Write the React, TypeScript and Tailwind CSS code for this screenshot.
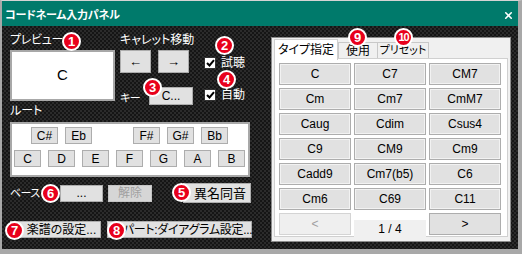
import { X } from "lucide-react";
import clsx from "clsx";
import type { ReactNode } from "react";

const font = "font-['Liberation_Sans','Noto_Sans_CJK_JP',sans-serif] [font-feature-settings:'palt']";

function Badge({ n, className }: { n: number; className?: string }) {
    return (
        <div
            className={clsx(
                "absolute z-20 flex h-[19px] w-[19px] items-center justify-center rounded-full border-2 border-white bg-[#e8001c] font-bold leading-none text-white",
                n > 9 ? "text-[11px] tracking-[-1px]" : "text-[13px]",
                className
            )}
        >
            {n}
        </div>
    );
}

function Btn({
    children,
    className,
    disabled,
}: {
    children?: ReactNode;
    className?: string;
    disabled?: boolean;
}) {
    return (
        <div
            className={clsx(
                "flex shrink-0 items-center justify-center whitespace-nowrap border text-[12px] leading-none",
                disabled
                    ? "border-[#c4c4c4] bg-[#d6d6d6] text-[#a0a0a0]"
                    : "border-[#adadad] bg-[#e1e1e1] text-black",
                className
            )}
        >
            {children}
        </div>
    );
}

function Check({ label }: { label: string }) {
    return (
        <div className="flex items-center gap-[5px]">
            <div className="flex h-[12px] w-[12px] items-center justify-center border border-[#333] bg-white">
                <svg width="9" height="8" viewBox="0 0 9 8">
                    <path d="M1 4 L3.5 6.5 L8 1.2" fill="none" stroke="#000" strokeWidth="2" />
                </svg>
            </div>
            <span className="text-[12px] leading-none text-white">{label}</span>
        </div>
    );
}

const chords = [
    "C", "C7", "CM7",
    "Cm", "Cm7", "CmM7",
    "Caug", "Cdim", "Csus4",
    "C9", "CM9", "Cm9",
    "Cadd9", "Cm7(b5)", "C6",
    "Cm6", "C69", "C11",
];

export default function App() {
    return (
        <div
            className={clsx(
                "flex h-[254px] w-[522px] flex-col overflow-hidden border-t border-l-2 border-r-4 border-b-[5px] border-t-[#d4d4d4] border-l-[#a8a8a8] border-r-[#a8a8a8] border-b-[#a8a8a8]",
                font
            )}
        >
            {/* title */}
            <div className="flex h-[25px] shrink-0 items-center justify-between bg-[#007a6b] pl-[3px] pr-[4px] pt-[3px]">
                <span className="text-[11px] font-bold leading-none tracking-[-0.2px] text-white">
                    コードネーム入力パネル
                </span>
                <X size={11} strokeWidth={3.5} className="text-white" />
            </div>

            <div className="flex flex-1 bg-[image:conic-gradient(#2b2b2b_25%,#151515_0_50%,#2b2b2b_0_75%,#151515_0)] bg-[length:4px_4px] pl-[8px]">
                {/* left column */}
                <div className="flex w-[243px] flex-col pt-[5px]">
                    <div className="flex h-[72px]">
                        <div className="relative w-[105px]">
                            <div className="h-[19px] text-[12px] leading-[19px] tracking-[-0.3px] text-white">プレビュー</div>
                            <Badge n={1} className="left-[52px] top-[1px]" />
                            <div className="flex h-[51px] w-[105px] items-center justify-center border-2 border-[#a8a8a8] bg-white text-[15px] text-black">
                                C
                            </div>
                        </div>
                        <div className="ml-[5px] w-[84px]">
                            <div className="h-[19px] whitespace-nowrap text-[12px] leading-[19px] text-white">キャレット移動</div>
                            <div className="flex gap-[7px]">
                                <Btn className="h-[23px] w-[31px] text-[13px]">←</Btn>
                                <Btn className="h-[23px] w-[31px] border-[#0078d7] text-[13px]">→</Btn>
                            </div>
                            <div className="relative mt-[14px] flex h-[18px] items-center">
                                <span className="mt-[4px] w-[29px] whitespace-nowrap text-[11px] leading-none tracking-[-0.5px] text-white">キー</span>
                                <Btn className="h-[18px] w-[44px]">C...</Btn>
                                <Badge n={3} className="left-[23px] top-[-9px]" />
                            </div>
                        </div>
                        <div className="relative w-[48px] pt-[26px]">
                            <Badge n={2} className="left-[11px] top-[5px]" />
                            <Check label="試聴" />
                            <div className="mt-[20px]">
                                <Check label="自動" />
                            </div>
                            <Badge n={4} className="left-[13px] top-[39px]" />
                        </div>
                    </div>

                    <div className="h-[17px] text-[12px] leading-[17px] text-white">ルート</div>
                    <div className="mt-[2px] flex h-[55px] w-[240px] flex-col gap-[6px] border-2 border-[#a8a8a8] bg-white pl-[2px] pt-[3px]">
                        <div className="ml-[17px] flex gap-[7px]">
                            <Btn className="h-[17px] w-[27px]">C#</Btn>
                            <Btn className="h-[17px] w-[27px]">Eb</Btn>
                            <div className="w-[27px]" />
                            <Btn className="h-[17px] w-[27px]">F#</Btn>
                            <Btn className="h-[17px] w-[27px]">G#</Btn>
                            <Btn className="h-[17px] w-[27px]">Bb</Btn>
                        </div>
                        <div className="flex gap-[7px]">
                            {["C", "D", "E", "F", "G", "A", "B"].map((k) => (
                                <Btn key={k} className="h-[17px] w-[27px]">
                                    {k}
                                </Btn>
                            ))}
                        </div>
                    </div>

                    <div className="relative mt-[6px] flex h-[20px] items-center pr-[2px]">
                        <span className="w-[50px] whitespace-nowrap text-[11px] leading-none tracking-[-0.6px] text-white">ベース</span>
                        <Btn className="h-[17px] w-[43px]">...</Btn>
                        <Btn disabled className="ml-[5px] h-[17px] w-[44px]">解除</Btn>
                        <Btn className="ml-auto h-[20px] w-[68px] pl-[6px] text-[13px]">異名同音</Btn>
                        <Badge n={6} className="left-[31px] top-[1px]" />
                        <Badge n={5} className="left-[162px] top-[0px]" />
                    </div>

                    <div className="relative mt-[18px] flex h-[17px]">
                        <Btn className="h-[17px] w-[91px] pl-[12px]">楽譜の設定...</Btn>
                        <Btn className="ml-[6px] h-[17px] w-[145px] pl-[16px] text-[11.5px] tracking-[-0.3px]">パート:ダイアグラム設定...</Btn>
                        <Badge n={7} className="left-[-5px] top-0" />
                        <Badge n={8} className="left-[97px] top-0" />
                    </div>
                </div>

                {/* right group box */}
                <div className="relative ml-[18px] mt-[11px] flex h-[205px] w-[240px] flex-col border border-[#8c8c8c] bg-[#f0f0f0] pl-[2px] pt-[1px]">
                    <Badge n={9} className="left-[76px] top-[-10px]" />
                    <Badge n={10} className="left-[122px] top-[-10px]" />
                    <div className="flex h-[19px] items-end">
                        <div className="relative z-10 flex h-[21px] w-[64px] items-center justify-center self-start whitespace-nowrap border border-b-0 border-[#d0d0d0] bg-white text-[12px] text-black">
                            タイプ指定
                        </div>
                        <div className="flex h-[16px] w-[40px] items-center justify-center whitespace-nowrap border border-b-0 border-[#c8c8c8] bg-[#f0f0f0] text-[12px] leading-none text-black">
                            使用
                        </div>
                        <div className="flex h-[16px] w-[51px] items-center justify-center whitespace-nowrap border border-b-0 border-l-0 border-[#c8c8c8] bg-[#f0f0f0] text-[11px] leading-none text-black">
                            プリセット
                        </div>
                    </div>
                    <div className="h-[179px] w-[234px] border border-[#d0d0d0] bg-white pl-[4px] pt-[4px]">
                        <div className="grid grid-cols-[72px_72px_72px] auto-rows-[22px] gap-[3px]">
                            {chords.map((c) => (
                                <Btn key={c} className="h-[22px] shadow-[inset_0_0_0_1px_#f2f2f2]">
                                    {c}
                                </Btn>
                            ))}
                            <div className="flex h-[22px] items-center justify-center border border-[#d4d4d4] bg-[#efefef] text-[12px] text-[#a0a0a0]">
                                &lt;
                            </div>
                            <div className="mt-[7px] flex h-[17px] items-center justify-center bg-[#f0f0f0] text-[12px] text-black">
                                1 / 4
                            </div>
                            <Btn className="h-[22px] border-[#adadad]">&gt;</Btn>
                        </div>
                    </div>
                </div>
            </div>
        </div>
    );
}
